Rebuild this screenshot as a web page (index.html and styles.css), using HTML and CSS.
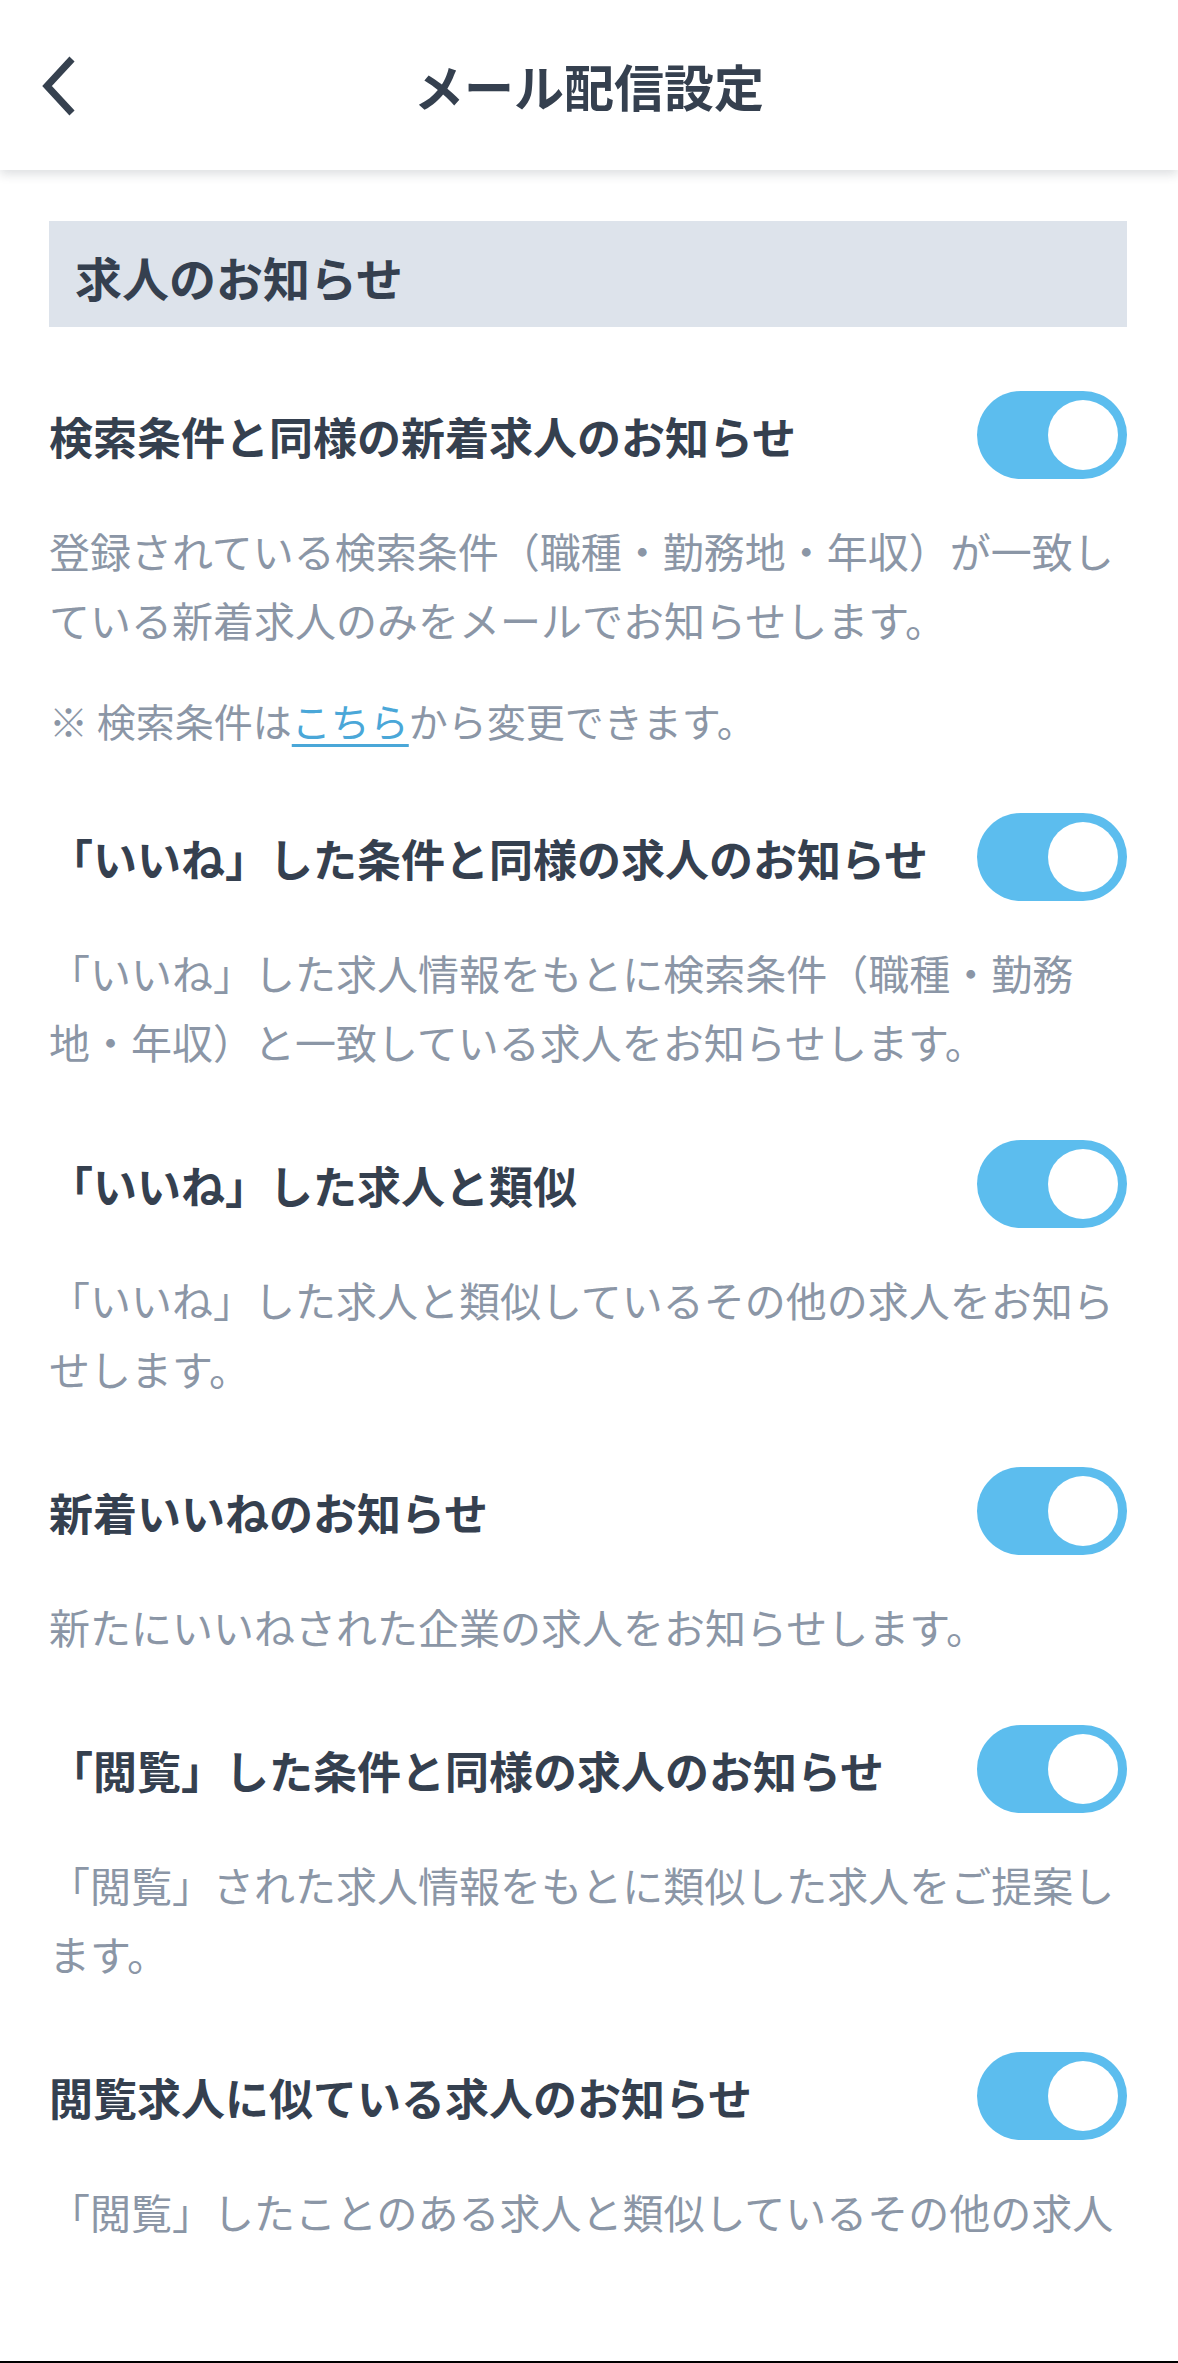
FILE: index.html
```html
<!DOCTYPE html>
<html lang="ja">
  <head>
    <meta charset="UTF-8" />
    <meta name="viewport" content="width=device-width, initial-scale=1" />
    <title>メール配信設定</title>
    <link rel="stylesheet" href="styles.css">
  </head>
  <body>
    <div class="page">
      <header class="app-header">
        <a class="back-btn" href="#" aria-label="戻る">
          <svg width="40" height="60" viewBox="0 0 40 60">
            <path d="M32 3 L7 30 L32 57" fill="none" stroke="#36414f" stroke-width="7" stroke-linejoin="miter" />
          </svg>
        </a>
        <h1>メール配信設定</h1>
        <span class="spacer"></span>
      </header>

      <main class="content">
        <h2 class="section-title">求人のお知らせ</h2>

        <div class="setting-list">
          <div class="setting">
            <div class="setting-head">
              <span class="setting-name">検索条件と同様の新着求人のお知らせ</span>
              <label class="switch"><input type="checkbox" checked /><span class="knob"></span></label>
            </div>
            <p class="setting-desc">登録されている検索条件（職種・勤務地・年収）が一致している新着求人のみをメールでお知らせします。</p>
            <p class="setting-note">※ 検索条件は<a href="#">こちら</a>から変更できます。</p>
          </div>

          <div class="setting">
            <div class="setting-head">
              <span class="setting-name">「いいね」した条件と同様の求人のお知らせ</span>
              <label class="switch"><input type="checkbox" checked /><span class="knob"></span></label>
            </div>
            <p class="setting-desc">「いいね」した求人情報をもとに検索条件（職種・勤務地・年収）と一致している求人をお知らせします。</p>
          </div>

          <div class="setting">
            <div class="setting-head">
              <span class="setting-name">「いいね」した求人と類似</span>
              <label class="switch"><input type="checkbox" checked /><span class="knob"></span></label>
            </div>
            <p class="setting-desc">「いいね」した求人と類似しているその他の求人をお知らせします。</p>
          </div>

          <div class="setting">
            <div class="setting-head">
              <span class="setting-name">新着いいねのお知らせ</span>
              <label class="switch"><input type="checkbox" checked /><span class="knob"></span></label>
            </div>
            <p class="setting-desc">新たにいいねされた企業の求人をお知らせします。</p>
          </div>

          <div class="setting">
            <div class="setting-head">
              <span class="setting-name">「閲覧」した条件と同様の求人のお知らせ</span>
              <label class="switch"><input type="checkbox" checked /><span class="knob"></span></label>
            </div>
            <p class="setting-desc">「閲覧」された求人情報をもとに類似した求人をご提案します。</p>
          </div>

          <div class="setting">
            <div class="setting-head">
              <span class="setting-name">閲覧求人に似ている求人のお知らせ</span>
              <label class="switch"><input type="checkbox" checked /><span class="knob"></span></label>
            </div>
            <p class="setting-desc">「閲覧」したことのある求人と類似しているその他の求人</p>
          </div>
        </div>
      </main>

      <div class="bottom-edge"></div>
    </div>
  </body>
</html>
```

FILE: styles.css
```css
/* Base */
body {
  margin: 0;
  font-family: "Noto Sans CJK JP", "Noto Sans", sans-serif;
  background: #fff;
  color: #35404f;
}

.page {
  min-height: 100vh;
  display: flex;
  flex-direction: column;
}

/* Header */
.app-header {
  height: 170px;
  display: grid;
  grid-template-columns: 1fr auto 1fr;
  align-items: center;
  padding: 0 40px;
  background: #fff;
  box-shadow: 0 4px 10px rgba(40, 50, 65, 0.16);
  position: relative;
  z-index: 1;
}

.back-btn {
  display: flex;
  align-items: center;
  width: 40px;
  height: 60px;
  margin-top: 2px;
}

.app-header h1 {
  margin: 0;
  font-size: 50px;
  font-weight: 700;
  line-height: 1;
  color: #35404f;
}

/* Content */
.content {
  padding: 51px 51px 0 49px;
}

.section-title {
  margin: 0;
  height: 106px;
  display: flex;
  align-items: center;
  padding: 4px 26px 0;
  box-sizing: border-box;
  background: #dde3eb;
  font-size: 47px;
  font-weight: 700;
  color: #35404f;
}

.setting-list {
  display: flex;
  flex-direction: column;
  gap: 64.5px;
  padding-top: 64px;
}

.setting-head {
  display: flex;
  align-items: center;
  justify-content: space-between;
  gap: 20px;
}

.setting-name {
  font-size: 44px;
  font-weight: 700;
  line-height: 1.3;
  padding-top: 3px;
  color: #35404f;
}

.setting-desc {
  margin: 36.5px 0 0;
  font-size: 41px;
  line-height: 69px;
  color: #8b96a6;
}

.setting-note {
  margin: 37px 0 0;
  font-size: 39px;
  line-height: 58px;
  color: #8b96a6;
}

.setting-note a {
  color: #4aa7d8;
  text-decoration: underline;
  text-decoration-thickness: 3px;
  text-underline-offset: 7px;
}

/* Toggle switch */
.switch {
  flex: none;
  width: 150px;
  height: 88px;
  border-radius: 44px;
  background: #5cbdee;
  display: flex;
  align-items: center;
  justify-content: flex-end;
  padding-right: 9px;
  box-sizing: border-box;
  cursor: pointer;
}

.switch input {
  display: none;
}

.knob {
  width: 70px;
  height: 70px;
  border-radius: 50%;
  background: #fff;
}

.bottom-edge {
  margin-top: auto;
  height: 2px;
  background: #000;
}
```
